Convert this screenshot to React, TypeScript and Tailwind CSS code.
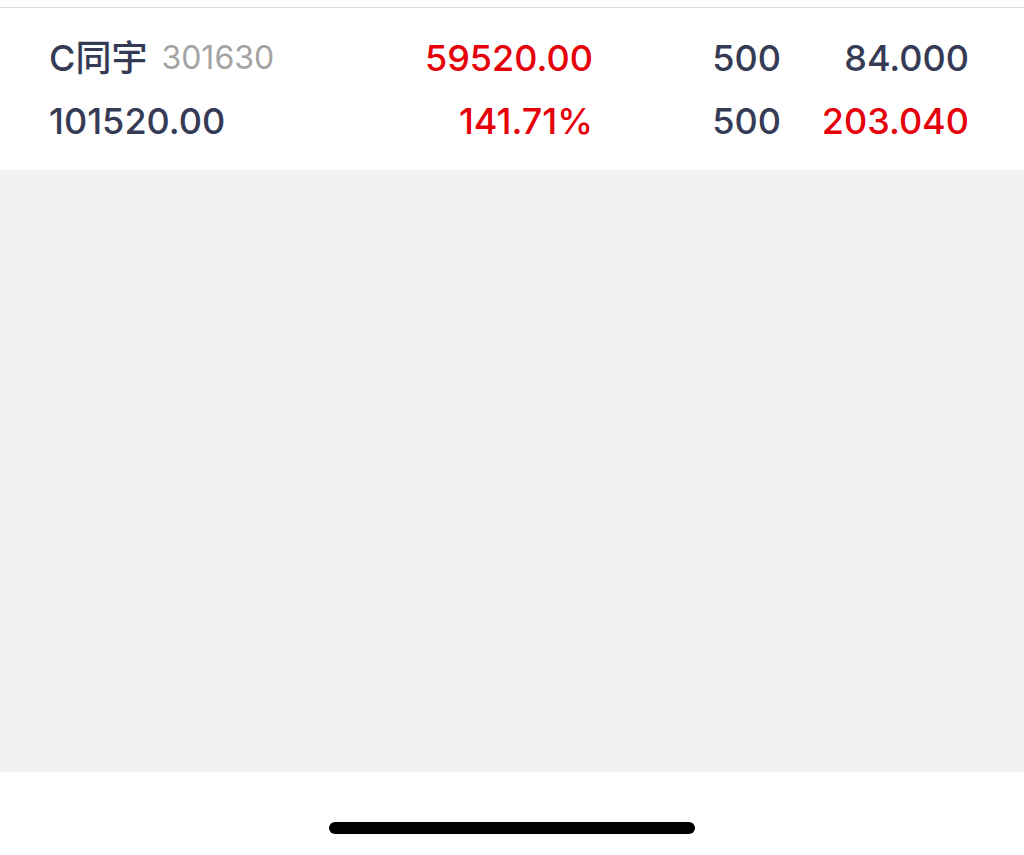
export default function App() {
  return (
    <div className="flex h-[855px] w-[1024px] flex-col bg-white font-['Inter','Noto_Sans_CJK_SC',sans-serif]">
      <div className="h-[8px] shrink-0 border-b border-[#dcdcdc]" />
      <div className="flex shrink-0 flex-col gap-[21px] pb-[28px] pl-[49px] pr-[55px] pt-[29px] text-[36px] font-medium leading-[42px] text-[#363b55]">
        <div className="flex items-center">
          <div className="flex w-[350px] items-center gap-[14px]">
            <span>C同宇</span>
            <span className="text-[32px] font-normal text-[#a3a3a3]">301630</span>
          </div>
          <div className="w-[194px] text-right text-[#e6000a]">59520.00</div>
          <div className="w-[188px] text-right">500</div>
          <div className="flex-1 text-right">84.000</div>
        </div>
        <div className="flex items-center">
          <div className="w-[350px]">101520.00</div>
          <div className="w-[194px] text-right text-[#e6000a]">141.71%</div>
          <div className="w-[188px] text-right">500</div>
          <div className="flex-1 text-right text-[#e6000a]">203.040</div>
        </div>
      </div>
      <div className="flex-1 bg-[#f1f1f1]" />
      <div className="flex h-[83px] shrink-0 justify-center pt-[50px]">
        <div className="h-[12px] w-[366px] rounded-full bg-black" />
      </div>
    </div>
  );
}
